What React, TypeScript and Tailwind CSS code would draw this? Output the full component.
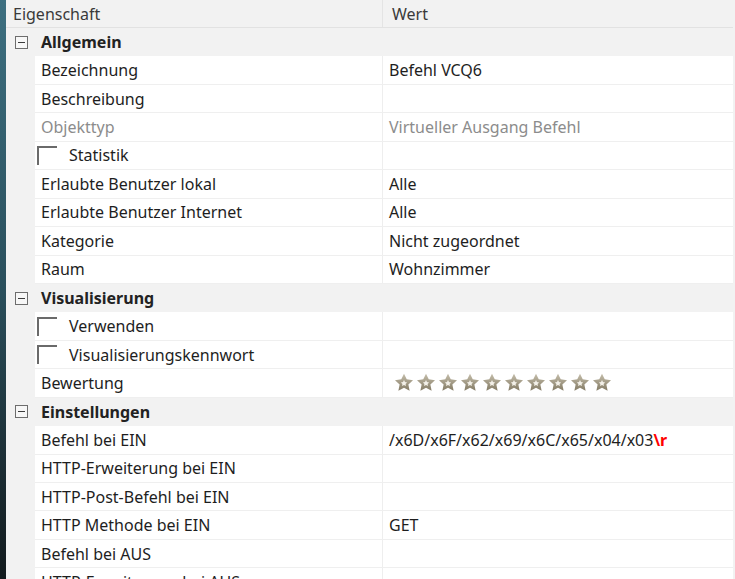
import React from 'react';

type Row =
  | { kind: 'section'; label: string }
  | { kind: 'prop'; label: string; value?: React.ReactNode; check?: boolean; muted?: boolean };

const rows: Row[] = [
  { kind: 'section', label: 'Allgemein' },
  { kind: 'prop', label: 'Bezeichnung', value: 'Befehl VCQ6' },
  { kind: 'prop', label: 'Beschreibung' },
  { kind: 'prop', label: 'Objekttyp', value: 'Virtueller Ausgang Befehl', muted: true },
  { kind: 'prop', label: 'Statistik', check: true },
  { kind: 'prop', label: 'Erlaubte Benutzer lokal', value: 'Alle' },
  { kind: 'prop', label: 'Erlaubte Benutzer Internet', value: 'Alle' },
  { kind: 'prop', label: 'Kategorie', value: 'Nicht zugeordnet' },
  { kind: 'prop', label: 'Raum', value: 'Wohnzimmer' },
  { kind: 'section', label: 'Visualisierung' },
  { kind: 'prop', label: 'Verwenden', check: true },
  { kind: 'prop', label: 'Visualisierungskennwort', check: true },
  { kind: 'prop', label: 'Bewertung', value: 'stars' },
  { kind: 'section', label: 'Einstellungen' },
  {
    kind: 'prop',
    label: 'Befehl bei EIN',
    value: (
      <>
        /x6D/x6F/x62/x69/x6C/x65/x04/x03<span className="font-bold text-[#ff0000]">\r</span>
      </>
    ),
  },
  { kind: 'prop', label: 'HTTP-Erweiterung bei EIN' },
  { kind: 'prop', label: 'HTTP-Post-Befehl bei EIN' },
  { kind: 'prop', label: 'HTTP Methode bei EIN', value: 'GET' },
  { kind: 'prop', label: 'Befehl bei AUS' },
  { kind: 'prop', label: 'HTTP-Erweiterung bei AUS' },
];

const Star = ({ id }: { id: number }) => (
  <svg width="20" height="19" viewBox="0 0 24 23" className="shrink-0">
    <defs>
      <linearGradient id={`sg${id}`} x1="0" y1="0" x2="0" y2="1">
        <stop offset="0" stopColor="#c4bdaa" />
        <stop offset="1" stopColor="#857c66" />
      </linearGradient>
    </defs>
    <path
      d="M12 0.8l3.3 6.9 7.6 1-5.6 5.3 1.5 7.5L12 17.8l-6.8 3.7 1.5-7.5-5.6-5.3 7.6-1z"
      fill={`url(#sg${id})`}
    />
    <path d="M12 8.6l1.2 2.4 2.6.4-1.9 1.8.5 2.6L12 14.5l-2.4 1.3.5-2.6-1.9-1.8 2.6-.4z" fill="#f3f0e8" />
  </svg>
);

const MinusBox = () => (
  <div className="flex h-[13px] w-[13px] items-center justify-center border border-[#6d6d6d] bg-[#f7f7f7]">
    <div className="h-[1px] w-[7px] bg-[#3c3c3c]" />
  </div>
);

const CheckBox = () => <div className="h-[19px] w-[20px] shrink-0 border-l-2 border-t-2 border-[#6a6a6a]" />;

export default function App() {
  return (
    <div
      className="flex h-[579px] w-[735px] overflow-hidden text-[16px] text-[#1e1e1e]"
      style={{ fontFamily: '"Noto Sans", "Open Sans", sans-serif' }}
    >
      <div className="w-[6px] shrink-0 bg-gradient-to-b from-[#3d6f80] via-[#2a4f5c] to-[#121a1d]" />
      <div className="flex min-w-0 flex-1 flex-col bg-[#f2f2f2] pr-[2px]">
        <div className="flex h-[28px] shrink-0 border-b border-[#e2e2e2] text-[#3a3a3a]">
          <div className="flex w-[377px] items-center border-r border-[#e4e4e4] pl-[7px]">Eigenschaft</div>
          <div className="flex flex-1 items-center pl-[9px]">Wert</div>
        </div>
        {rows.map((r, i) =>
          r.kind === 'section' ? (
            <div key={i} className="flex h-[28.44px] shrink-0 items-center">
              <div className="flex w-[29px] shrink-0 justify-center pl-[1px]">
                <MinusBox />
              </div>
              <div className="pl-[6px] font-bold text-[#222]">{r.label}</div>
            </div>
          ) : (
            <div key={i} className="flex h-[28.44px] shrink-0">
              <div className="w-[29px] shrink-0" />
              <div className="flex flex-1 border-b border-[#efefef] bg-white">
                <div className="flex w-[348px] shrink-0 items-center border-r border-[#eeeeee]">
                  {r.check ? (
                    <div className="flex items-center pl-[2px]">
                      <CheckBox />
                      <span className="pl-[12px]">{r.label}</span>
                    </div>
                  ) : (
                    <span className={`pl-[6px] ${r.muted ? 'text-[#8c8c8c]' : ''}`}>{r.label}</span>
                  )}
                </div>
                <div className={`flex flex-1 items-center pl-[6px] ${r.muted ? 'text-[#8c8c8c]' : ''}`}>
                  {r.value === 'stars' ? (
                    <div className="flex gap-[2px] pl-[5px]">
                      {Array.from({ length: 10 }).map((_, s) => (
                        <Star key={s} id={s} />
                      ))}
                    </div>
                  ) : (
                    r.value
                  )}
                </div>
              </div>
            </div>
          ),
        )}
      </div>
    </div>
  );
}
